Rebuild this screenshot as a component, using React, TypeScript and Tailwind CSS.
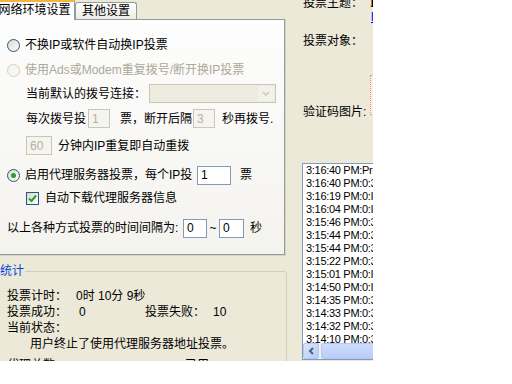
import type { ReactNode } from "react";

function Radio({ checked = false, disabled = false }: { checked?: boolean; disabled?: boolean }) {
  return (
    <span
      className={
        disabled
          ? "flex h-[13px] w-[13px] shrink-0 items-center justify-center rounded-full border border-[#d2d0c4] bg-[#f7f6f0]"
          : "flex h-[13px] w-[13px] shrink-0 items-center justify-center rounded-full border border-[#2a5781] bg-gradient-to-br from-[#d8d8d0] to-white"
      }
    >
      {checked && <span className="h-[5px] w-[5px] rounded-full bg-[#2aa12a]" />}
    </span>
  );
}

function Field({ value, className, disabled = false }: { value: string; className: string; disabled?: boolean }) {
  return (
    <span
      className={
        (disabled
          ? "border-[#c9c7ba] bg-[#f5f4ee] text-[#b4b1a3] "
          : "border-[#7f9db9] bg-white text-black ") +
        "flex h-[19px] shrink-0 items-center border px-[3px] " +
        className
      }
    >
      {value}
    </span>
  );
}

function Row({ children, className }: { children: ReactNode; className: string }) {
  return <div className={"flex items-center whitespace-nowrap " + className}>{children}</div>;
}

const logs = [
  "3:16:40 PM:Proxy 列表已更新",
  "3:16:40 PM:0:3 次投票",
  "3:16:19 PM:0:IP 无效",
  "3:16:04 PM:0:IP 无效",
  "3:15:46 PM:0:3 次投票",
  "3:15:44 PM:0:3 次投票",
  "3:15:44 PM:0:3 次投票",
  "3:15:22 PM:0:3 次投票",
  "3:15:01 PM:0:IP 无效",
  "3:14:50 PM:0:IP 无效",
  "3:14:35 PM:0:3 次投票",
  "3:14:33 PM:0:3 次投票",
  "3:14:32 PM:0:3 次投票",
  "3:14:10 PM:0:3 次投票",
];

export default function App() {
  return (
    <div className="flex h-[361px] w-[373px] overflow-hidden bg-[#ece9d8] font-[family-name:'Liberation_Sans','Noto_Sans_CJK_SC',sans-serif] text-[12px] leading-[16px] text-black">
      {/* left: tabs + stats */}
      <div className="-ml-[6px] flex w-[293px] shrink-0 flex-col">
        <div className="flex h-[19px] items-end">
          <div className="relative z-10 -mb-px flex h-[20px] w-[81px] items-center justify-center border-x border-t-[2px] border-x-[#919b9c] border-t-[#f7b33c] bg-[#fdfdfd] pb-[3px]">
            网络环境设置
          </div>
          <div className="flex h-[17px] w-[62px] items-center justify-center rounded-t-[3px] border-x border-t border-[#919b9c] bg-gradient-to-b from-white to-[#ecebe4]">
            其他设置
          </div>
        </div>

        <div className="mr-[2px] flex flex-col border border-[#919b9c] bg-gradient-to-b from-[#fdfdfd] to-[#f4f3ee] pb-[16px] pl-[12px] shadow-[1px_1px_0_#d6d4c8]">
          <Row className="mt-[15px] h-[20px] gap-[5px]">
            <Radio />
            <span>不换IP或软件自动换IP投票</span>
          </Row>
          <Row className="mt-[5px] h-[20px] gap-[5px] text-[#aca899]">
            <Radio disabled />
            <span>使用Ads或Modem重复拨号/断开换IP投票</span>
          </Row>
          <Row className="mt-[4px] ml-[19px] h-[19px]">
            <span className="w-[123px] shrink-0">当前默认的拨号连接：</span>
            <span className="flex h-[19px] w-[127px] items-center justify-end border border-[#c9c7ba] bg-[#eeecdf] p-px">
              <span className="flex h-[15px] w-[16px] items-center justify-center rounded-[2px] bg-[#f3f2ea]">
                <svg width="8" height="5" viewBox="0 0 8 5">
                  <path d="M1 1 L4 4 L7 1" stroke="#c9c7ba" strokeWidth="1.5" fill="none" />
                </svg>
              </span>
            </span>
          </Row>
          <Row className="mt-[6px] ml-[19px] h-[19px]">
            <span className="w-[62px] shrink-0">每次拨号投</span>
            <Field value="1" className="w-[22px]" disabled />
            <span className="ml-[10px] w-[73px] shrink-0">票，断开后隔</span>
            <Field value="3" className="w-[22px]" disabled />
            <span className="ml-[7px]">秒再拨号.</span>
          </Row>
          <Row className="mt-[8px] ml-[19px] h-[19px]">
            <Field value="60" className="w-[26px]" disabled />
            <span className="ml-[6px]">分钟内IP重复即自动重拨</span>
          </Row>
          <Row className="mt-[10px] h-[20px]">
            <Radio checked />
            <span className="ml-[5px] w-[172px] shrink-0">启用代理服务器投票，每个IP投</span>
            <Field value="1" className="w-[34px]" />
            <span className="ml-[9px]">票</span>
          </Row>
          <Row className="mt-[3px] ml-[19px] h-[20px] gap-[6px]">
            <span className="flex h-[13px] w-[13px] items-center justify-center border border-[#2a5781] bg-gradient-to-br from-[#d8d8d0] to-white">
              <svg width="9" height="9" viewBox="0 0 9 9">
                <path d="M1 4.5 L3.5 7 L8 1.5" stroke="#2aa12a" strokeWidth="2" fill="none" />
              </svg>
            </span>
            <span>自动下载代理服务器信息</span>
          </Row>
          <Row className="mt-[10px] h-[20px]">
            <span className="w-[176px] shrink-0">以上各种方式投票的时间间隔为:</span>
            <Field value="0" className="w-[24px]" />
            <span className="w-[12px] text-center">~</span>
            <Field value="0" className="w-[25px]" />
            <span className="ml-[6px]">秒</span>
          </Row>
        </div>

        <fieldset className="mt-[8px] h-[140px] rounded-[3px] border border-[#d0d0bf]">
          <legend className="ml-[4px] px-px leading-[16px] text-[#0046d5]">统计</legend>
          <div className="mt-[9px] flex flex-col whitespace-nowrap pl-[12px]">
            <div className="flex h-[16px]">
              <span className="w-[69px]">投票计时：</span>
              <span>0时 10分 9秒</span>
            </div>
            <div className="flex h-[16px]">
              <span className="w-[72px]">投票成功：</span>
              <span className="w-[66px]">0</span>
              <span className="w-[68px]">投票失败：</span>
              <span>10</span>
            </div>
            <div className="h-[16px]">当前状态：</div>
            <div className="h-[16px] pl-[23px]">用户终止了使用代理服务器地址投票。</div>
            <div className="mt-[5px] flex h-[16px]">
              <span className="w-[178px]">代理总数：</span>
              <span>已用：</span>
            </div>
          </div>
        </fieldset>
      </div>

      {/* right: vote info + log */}
      <div className="flex min-w-0 flex-1 flex-col whitespace-nowrap">
        <div className="-mt-[5px] flex h-[16px] pl-[16px]">
          <span className="w-[67px] shrink-0">投票主题：</span>
          <span className="font-[family-name:'Liberation_Serif',serif] text-[13px] font-bold">I</span>
        </div>
        <div className="h-[13px] pl-[84px] leading-[13px] text-[#0000ff] underline">http://</div>
        <div className="mt-[9px] h-[16px] pl-[16px]">投票对象：</div>
        <div className="mt-[26px] flex h-[45px] pl-[16px]">
          <span className="w-[67px] shrink-0 self-end">验证码图片:</span>
          <span className="h-[40px] w-[60px] shrink-0 border border-dotted border-[#d59a68] bg-[#fbefe2]" />
        </div>

        <div className="mt-[43px] ml-[15px] flex h-[197px] w-[200px] shrink-0 flex-col border border-[#7f9db9] bg-white">
          <div className="flex-1 overflow-hidden pl-[3px] font-[family-name:'Liberation_Sans',sans-serif] text-[11px] leading-[13px] tracking-[-0.3px]">
            {logs.map((l, i) => (
              <div key={i} className="h-[13px]">
                {l}
              </div>
            ))}
          </div>
          <div className="flex h-[16px] shrink-0 bg-[#f3f1ea]">
            <span className="flex h-[16px] w-[16px] items-center justify-center rounded-[2px] border border-[#b4c8f6] bg-gradient-to-br from-[#dbe6fe] to-[#b6cbf6]">
              <svg width="6" height="8" viewBox="0 0 6 8">
                <path d="M5 1 L2 4 L5 7" stroke="#4d6185" strokeWidth="2" fill="none" />
              </svg>
            </span>
            <span className="ml-[2px] h-[16px] flex-1 rounded-[2px] border border-[#b4c8f6] bg-gradient-to-b from-[#cddcfd] to-[#b9cdf8]" />
          </div>
        </div>
      </div>
    </div>
  );
}
